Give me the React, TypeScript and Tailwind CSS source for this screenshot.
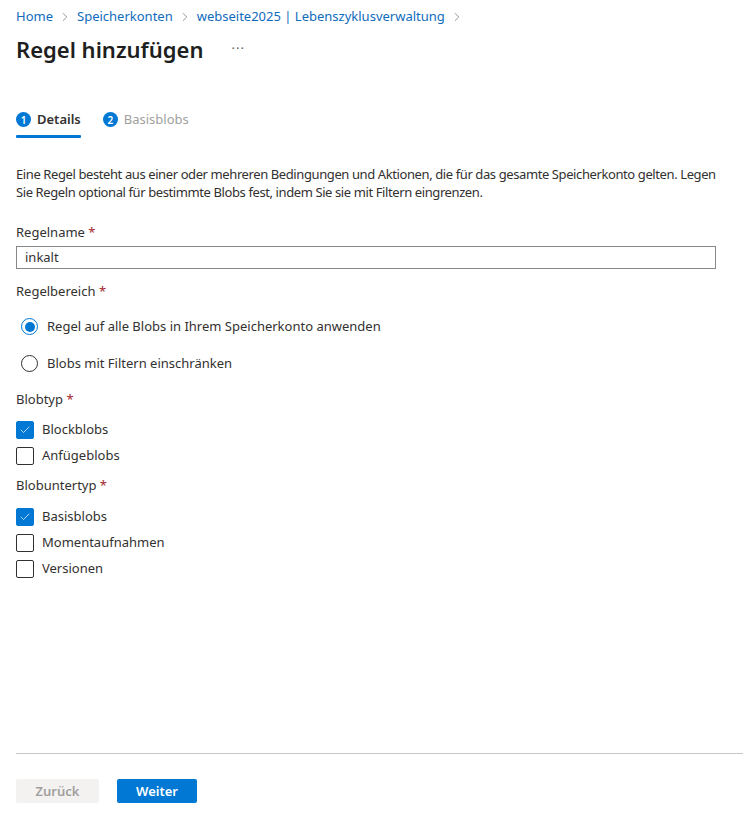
import { ChevronRight, Check } from "lucide-react";

const font = { fontFamily: '"Noto Sans", "Open Sans", sans-serif' };

function Crumb({ label }: { label: string }) {
  return (
    <span className="flex items-center">
      <span className="text-[#0f6cbd]">{label}</span>
      <ChevronRight className="mx-[5px] h-[14px] w-[14px] text-[#8a8886]" strokeWidth={1.5} />
    </span>
  );
}

function Label({ text }: { text: string }) {
  return (
    <div className="text-[13px] text-[#323130]">
      {text} <span className="text-[#a4262c]">*</span>
    </div>
  );
}

function Radio({ checked, label }: { checked?: boolean; label: string }) {
  return (
    <div className="flex h-[20px] items-center gap-[9px] pl-[5px]">
      <span
        className={
          "flex h-[17px] w-[17px] items-center justify-center rounded-full border " +
          (checked ? "border-[#0078d4]" : "border-[#323130]")
        }
      >
        {checked && <span className="h-[10px] w-[10px] rounded-full bg-[#0078d4]" />}
      </span>
      <span className="text-[13px] text-[#323130]">{label}</span>
    </div>
  );
}

function Checkbox({ checked, label }: { checked?: boolean; label: string }) {
  return (
    <div className="flex h-[18px] items-center gap-[8px]">
      <span
        className={
          "flex h-[18px] w-[18px] items-center justify-center rounded-[2px] border " +
          (checked ? "border-[#0078d4] bg-[#0078d4]" : "border-[#323130] bg-white")
        }
      >
        {checked && <Check className="h-[12px] w-[12px] text-white" strokeWidth={1.4} />}
      </span>
      <span className="text-[13px] text-[#323130]">{label}</span>
    </div>
  );
}

function StepDot({ n }: { n: number }) {
  return (
    <span className="flex h-[15px] w-[15px] items-center justify-center rounded-full bg-[#0078d4] text-[10px] font-semibold leading-none text-white">
      {n}
    </span>
  );
}

export default function App() {
  return (
    <div className="flex h-[818px] w-[743px] flex-col bg-white" style={font}>
      <div className="px-4">
        <nav className="flex h-[20px] items-center pt-[14px] text-[13px]">
          <Crumb label="Home" />
          <Crumb label="Speicherkonten" />
          <Crumb label="webseite2025 | Lebenszyklusverwaltung" />
        </nav>
        <div className="mt-[14px] flex items-center">
          <h1 className="text-[22px] font-semibold leading-[30px] text-[#201f1e]">Regel hinzufügen</h1>
          <span className="ml-[28px] text-[13px] tracking-[1px] text-[#605e5c]">···</span>
        </div>

        <div className="mt-[46px] flex items-start gap-[22px]">
          <div className="flex flex-col">
            <div className="flex items-center gap-[6px] pb-[5px]">
              <StepDot n={1} />
              <span className="text-[13px] font-semibold text-[#323130]">Details</span>
            </div>
            <div className="h-[3px] w-full rounded-[1px] bg-[#0078d4]" />
          </div>
          <div className="flex items-center gap-[6px]">
            <StepDot n={2} />
            <span className="text-[13px] text-[#a19f9d]">Basisblobs</span>
          </div>
        </div>

        <p className="mt-[27px] text-[13px] leading-[18px] tracking-[-0.4px] text-[#323130]">
          Eine Regel besteht aus einer oder mehreren Bedingungen und Aktionen, die für das gesamte Speicherkonto gelten. Legen Sie Regeln optional für bestimmte Blobs fest, indem Sie sie mit Filtern eingrenzen.
        </p>

        <div className="mt-[22px]">
          <Label text="Regelname" />
          <div className="mt-[4px] flex h-[23px] w-[700px] items-center border border-[#8a8886] px-[8px] text-[13px] text-[#323130]">
            inkalt
          </div>
        </div>

        <div className="mt-[13px]">
          <Label text="Regelbereich" />
          <div className="mt-[15px] flex flex-col gap-[17px]">
            <Radio checked label="Regel auf alle Blobs in Ihrem Speicherkonto anwenden" />
            <Radio label="Blobs mit Filtern einschränken" />
          </div>
        </div>

        <div className="mt-[16px]">
          <Label text="Blobtyp" />
          <div className="mt-[12px] flex flex-col gap-[8px]">
            <Checkbox checked label="Blockblobs" />
            <Checkbox label="Anfügeblobs" />
          </div>
        </div>

        <div className="mt-[11px]">
          <Label text="Blobuntertyp" />
          <div className="mt-[12px] flex flex-col gap-[8px]">
            <Checkbox checked label="Basisblobs" />
            <Checkbox label="Momentaufnahmen" />
            <Checkbox label="Versionen" />
          </div>
        </div>
      </div>

      <div className="mt-auto pl-4">
        <div className="h-px w-full bg-[#c8c6c4]" />
        <div className="flex gap-[18px] pt-[25px] pb-[15px]">
          <button className="h-[24px] w-[83px] rounded-[2px] bg-[#f3f2f1] pt-[2px] text-[13px] font-semibold text-[#a19f9d]">
            Zurück
          </button>
          <button className="h-[24px] w-[80px] rounded-[2px] bg-[#0078d4] pt-[2px] text-[13px] font-semibold text-white">
            Weiter
          </button>
        </div>
      </div>
    </div>
  );
}
